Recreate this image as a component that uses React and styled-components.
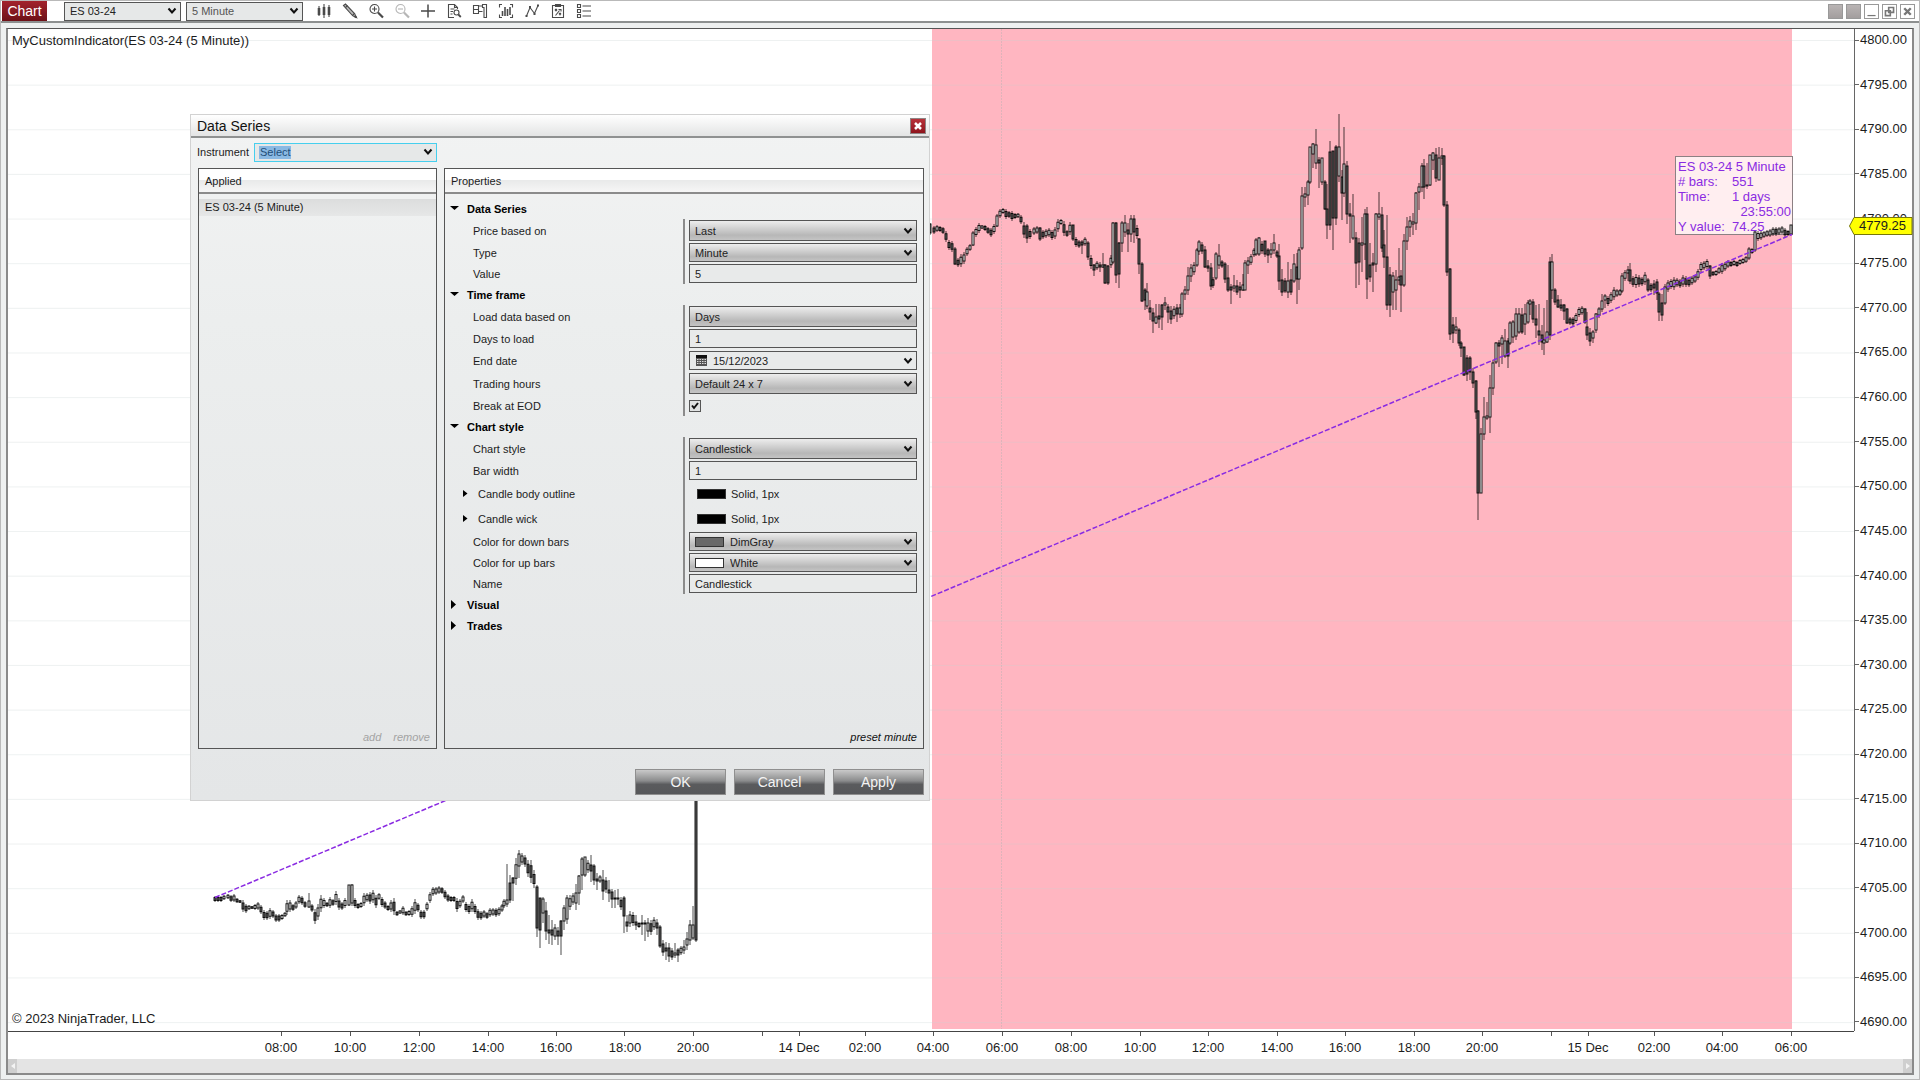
import styled, { createGlobalStyle } from "styled-components"
import { useState } from "react"

const GlobalStyle = createGlobalStyle`
  * { box-sizing: border-box; }
  body {
    margin: 0;
    font-family: "Liberation Sans", Arial, sans-serif;
    color: #1c1c1c;
  }
  button, input, select {
    font-family: inherit;
    font-size: 11px;
    color: inherit;
    margin: 0;
  }
`

/* ---------- window ---------- */

const Page = styled.div`
  position: relative;
  display: flex;
  flex-direction: column;
  height: 100vh;
  border: 1px solid #b9b9b9;
  background: #eef0f0;
`
const Toolbar = styled.header`
  display: flex;
  align-items: center;
  height: 22px;
  padding: 0 4px 0 1px;
  background: #fff;
  border-bottom: 2px solid #8d9090;
`
const ChartTab = styled.span`
  display: flex;
  align-items: center;
  justify-content: center;
  width: 45px;
  height: 20px;
  margin-right: 17px;
  background: linear-gradient(#a3222c, #6d1118);
  color: #fff;
  font-size: 14px;
`
const ToolSelects = styled.div`
  display: flex;
  gap: 5px;
`
const ToolIcons = styled.div`
  display: flex;
  gap: 10px;
  margin-left: 13px;
`
const IconButton = styled.button`
  display: flex;
  width: 16px;
  height: 16px;
  padding: 0;
  border: 0;
  background: none;
  opacity: ${p => (p.disabled ? 0.4 : 1)};
`
const WindowButtons = styled.div`
  display: flex;
  gap: 3px;
  margin-left: auto;
`
const WindowButton = styled.button`
  display: flex;
  width: 15px;
  height: 15px;
  padding: 0;
  border: 1px solid #999;
  background: ${p => (p.$filled ? "linear-gradient(#b9b4b4, #a39e9e)" : "#fff")};
`
const Main = styled.main`
  flex: 1;
  display: flex;
  min-height: 0;
  padding: 5px 5px 4px;
`
const Frame = styled.div`
  flex: 1;
  display: grid;
  grid-template-columns: 1fr 58px;
  grid-template-rows: 1fr 28px 14px;
  border: 2px solid #8a8a8a;
  border-top: 1px solid #555;
  background: #fff;
`

/* ---------- chart ---------- */

const Plot = styled.div`
  position: relative;
  min-height: 0;
`
const Layer = styled.svg`
  position: absolute;
  inset: 0;
  width: 100%;
  height: 100%;
  pointer-events: none;
`
const PlotText = styled.span`
  position: absolute;
  left: 4px;
  font-size: 13px;
  line-height: 14px;
  ${p => (p.$bottom ? "bottom: 5px;" : "top: 5px;")}
`
const Ruler = styled.div`
  position: absolute;
  right: 61px;
  top: 127px;
  width: 118px;
  height: 79px;
  padding: 2px 1px 0 2px;
  border: 1px solid #8c8083;
  background: rgba(255, 255, 255, 0.76);
  color: #8a2be2;
  font-size: 13px;
  line-height: 15px;
  white-space: nowrap;
`
const RulerRow = styled.div`
  display: grid;
  grid-template-columns: 54px 1fr;
`
const RulerTime = styled.div`
  text-align: right;
`
const PriceAxis = styled.div`
  position: relative;
  display: flex;
  flex-direction: column;
  justify-content: space-between;
  padding: 4px 0 2px;
  border-left: 1px solid #666;
  font-size: 13px;
  line-height: 14px;
`
const Price = styled.div`
  display: flex;
  align-items: center;
  gap: 1px;
  height: 14px;
  &::before {
    content: "";
    width: 4px;
    height: 1px;
    background: #666;
  }
`
const PriceTag = styled.div`
  position: absolute;
  left: -6px;
  right: 0;
  top: 188px;
  height: 18px;
  svg {
    position: absolute;
    inset: 0;
  }
  span {
    position: relative;
    display: block;
    padding-left: 10px;
    font-size: 13px;
    line-height: 18px;
  }
`
const TimeAxis = styled.div`
  position: relative;
  border-top: 1px solid #444;
`
const Corner = styled.div``
const TimeTick = styled.div`
  position: absolute;
  top: 0;
  width: 60px;
  margin-left: -29px;
  text-align: center;
  font-size: 13px;
  line-height: 14px;
  white-space: nowrap;
  &::before {
    content: "";
    display: block;
    width: 1px;
    height: 4px;
    margin: 0 auto 5px;
    background: #555;
  }
`
const ScrollBar = styled.div`
  grid-column: 1 / 3;
  display: flex;
  justify-content: space-between;
  background: #e4e4e4;
`
const ScrollButton = styled.button`
  width: 9px;
  padding: 0;
  border: 0;
  background: #cfcfcf;
  display: flex;
  align-items: center;
  justify-content: center;
`

/* ---------- dialog ---------- */

const Dialog = styled.section`
  position: absolute;
  left: 189px;
  top: 113px;
  width: 740px;
  height: 687px;
  display: flex;
  flex-direction: column;
  border: 1px solid #d2d2d2;
  background: linear-gradient(#f2f3f3, #eceeee 30%, #e4e6e7);
`
const TitleBar = styled.div`
  display: flex;
  align-items: center;
  justify-content: space-between;
  height: 23px;
  padding: 0 3px 0 6px;
  background: linear-gradient(#fff, #e3e4e4);
  border-bottom: 2px solid #8f9191;
`
const Title = styled.h1`
  margin: 0;
  font-size: 14px;
  font-weight: normal;
  color: #111;
`
const CloseButton = styled.button`
  display: flex;
  width: 16px;
  height: 16px;
  padding: 0;
  border: 1px solid #8f8585;
  background: linear-gradient(#b8323a, #8e141c);
`
const InstrumentRow = styled.div`
  display: grid;
  grid-template-columns: 57px 183px;
  align-items: center;
  height: 30px;
  padding: 0 0 2px 6px;
  font-size: 11px;
`
const Panels = styled.div`
  flex: 1;
  display: grid;
  grid-template-columns: 239px 1fr;
  gap: 7px;
  padding: 0 5px 0 7px;
  min-height: 0;
`
const Panel = styled.div`
  display: flex;
  flex-direction: column;
  border: 1px solid #555;
`
const PanelHeader = styled.h2`
  margin: 0;
  height: 25px;
  padding: 0 6px;
  font-size: 11px;
  font-weight: normal;
  line-height: 25px;
  background: linear-gradient(#fff 50%, #e9eaea 50%, #f6f6f6);
  border-bottom: 2px solid #8b8b8b;
`
const PanelFooter = styled.div`
  display: flex;
  justify-content: flex-end;
  gap: 12px;
  margin-top: auto;
  padding: 0 6px 4px;
`
const TextButton = styled.button`
  padding: 0;
  border: 0;
  background: none;
  font-style: italic;
  line-height: 14px;
  color: #111;
  &:disabled { color: #a3a3a3; }
`
const AppliedList = styled.ul`
  list-style: none;
  margin: 5px 0 0;
  padding: 0;
`
const AppliedItem = styled.li`
  padding: 0 6px;
  font-size: 11px;
  line-height: 17px;
  background: linear-gradient(#dcdddd, #e6e7e7);
`
const Groups = styled.div`
  padding-top: 4px;
`
const GroupButton = styled.button`
  display: flex;
  align-items: center;
  gap: 8px;
  width: 100%;
  height: 21px;
  padding: 0 0 0 5px;
  border: 0;
  background: none;
  font-weight: bold;
  color: #000;
`
const Row = styled.div`
  display: grid;
  grid-template-columns: 1fr 240px;
  height: ${p => p.$height || 21}px;
`
const Label = styled.label`
  display: flex;
  align-items: center;
  gap: 10px;
  padding-left: ${p => (p.$nested ? 18 : 28)}px;
  font-size: 11px;
`
const Value = styled.div`
  display: flex;
  align-items: center;
  padding: 0 6px 0 4px;
  border-left: 2px solid #8b8b8b;
  font-size: 11px;
`
const Field = styled.div`
  position: relative;
  width: ${p => p.$width || "100%"};
`
const Chevron = styled.svg`
  position: absolute;
  right: 4px;
  top: calc(50% - 4px);
  pointer-events: none;
`
const Select = styled.select`
  appearance: none;
  display: block;
  width: 100%;
  height: ${p => (p.$tall ? 21 : 19)}px;
  padding: 0 20px 0 ${p => (p.$swatch ? 40 : 5)}px;
  border: 1px solid #555;
  border-radius: 0;
  background: ${p => (p.$flat ? "#e6e8e8" : "linear-gradient(#ededed, #b7b7b7 75%, #c4c4c4)")};
  color: ${p => (p.$muted ? "#555" : "#222")};
  outline: 0;
`
const InstrumentSelect = styled(Select)`
  border-color: #46cfee;
  color: #1f4e79;
  background: linear-gradient(#8ab9e3, #8ab9e3) 4px 2px / 32px 13px no-repeat, #e6e8e8;
`
const TextBox = styled.input`
  display: block;
  width: 100%;
  height: 19px;
  padding: 0 5px 0 ${p => (p.$icon ? 23 : 5)}px;
  border: 1px solid #555;
  background: #e8eaea;
  color: #222;
  outline: 0;
`
const CalendarIcon = styled.svg`
  position: absolute;
  left: 7px;
  top: 4px;
`
const CheckBox = styled.input`
  appearance: none;
  display: block;
  width: 12px;
  height: 12px;
  border: 1px solid #555;
  background: #e0e2e2;
`
const CheckMark = styled.svg`
  position: absolute;
  left: 1px;
  top: 1px;
  pointer-events: none;
`
const Swatch = styled.span`
  width: 29px;
  height: 10px;
  border: 1px solid #333;
  background: ${p => p.$color};
`
const FieldSwatch = styled(Swatch)`
  position: absolute;
  left: 6px;
  top: 5px;
`
const Stroke = styled.span`
  display: flex;
  align-items: center;
  gap: 5px;
  padding-left: 8px;
`
const DialogButtons = styled.div`
  display: flex;
  justify-content: flex-end;
  gap: 8px;
  padding: 20px 5px 5px;
`
const DialogButton = styled.button`
  width: 91px;
  height: 26px;
  padding: 0;
  border: 1px solid #8f8f8f;
  background: linear-gradient(#c9c9c9, #8b8c8d 45%, #5a5b5d 60%, #56575a);
  color: #f4f4f4;
  font-size: 14px;
`

/* ---------- chart data ---------- */

// [x, high, low] or [x, high, low, bodyTop, bodyBottom]
const firstSession = [
  [215, 896, 902], [218, 896, 902], [221, 896, 902], [224, 895, 900], [228, 894, 899], [231, 895, 902], [234, 894, 902],
  [237, 898, 903], [240, 900, 903], [243, 900, 912], [246, 904, 913], [249, 905, 910], [252, 906, 909], [255, 904, 910],
  [258, 902, 910], [261, 905, 914], [264, 910, 920], [267, 911, 920], [270, 908, 919], [273, 910, 918], [276, 914, 922],
  [279, 914, 922], [282, 914, 920], [285, 912, 917], [287, 900, 915], [290, 900, 912], [293, 904, 911], [296, 901, 909],
  [299, 895, 904], [302, 896, 905], [305, 901, 908], [309, 893, 908, 901, 907], [312, 904, 912], [315, 909, 924],
  [318, 904, 920], [321, 895, 912], [324, 898, 908], [327, 902, 907], [330, 897, 908], [333, 899, 906], [336, 891, 905],
  [339, 898, 910], [342, 902, 910], [345, 898, 908], [349, 885, 906, 885, 905], [352, 884, 906, 885, 903], [355, 898, 908],
  [358, 903, 909], [361, 902, 908], [364, 893, 906], [367, 893, 902], [370, 892, 904], [373, 890, 903], [376, 895, 908],
  [379, 893, 900], [382, 897, 907], [385, 901, 909], [388, 905, 911], [391, 900, 912], [394, 898, 915], [397, 911, 916],
  [400, 910, 914], [403, 906, 915], [406, 911, 916], [409, 910, 916], [412, 906, 917], [415, 899, 914], [418, 903, 912],
  [421, 910, 919], [424, 910, 919], [427, 902, 911], [430, 892, 903], [433, 887, 896], [436, 887, 895], [439, 886, 894],
  [442, 887, 894], [445, 890, 899], [448, 894, 902], [451, 896, 902], [454, 896, 902], [457, 898, 912], [460, 899, 908],
  [463, 895, 903], [466, 902, 912], [469, 904, 914], [472, 899, 912], [475, 904, 914], [478, 909, 920], [481, 911, 920],
  [484, 910, 918], [487, 912, 919], [490, 908, 917], [493, 908, 916], [496, 908, 917], [499, 907, 916], [502, 904, 912],
  [504, 899, 908], [507, 864, 907, 900, 904], [510, 875, 903, 883, 900], [513, 877, 901, 878, 883], [516, 858, 885],
  [519, 850, 878, 854, 866], [522, 853, 865], [525, 855, 867], [528, 860, 877], [531, 860, 883], [534, 870, 888],
  [537, 885, 937, 887, 928], [540, 898, 948, 898, 930], [543, 897, 923, 899, 913], [546, 902, 940, 911, 931],
  [549, 915, 944, 930, 933], [552, 920, 945, 930, 935], [555, 924, 940], [558, 927, 945, 931, 936],
  [561, 920, 955, 921, 936], [564, 905, 930, 908, 921], [567, 895, 924, 898, 919], [570, 895, 910], [573, 893, 905],
  [576, 884, 910, 893, 903], [579, 875, 905, 876, 893], [582, 857, 890, 859, 875], [585, 857, 877, 857, 875],
  [588, 860, 873], [591, 855, 882, 865, 871], [594, 864, 885, 866, 880], [597, 873, 890, 879, 881], [600, 875, 883],
  [603, 870, 900, 880, 891], [606, 877, 893], [609, 880, 902, 890, 893], [612, 889, 908, 892, 899], [615, 890, 908, 898, 899],
  [618, 889, 905, 898, 899], [621, 897, 910], [624, 896, 933, 898, 916], [627, 915, 932, 922, 926], [630, 911, 927],
  [633, 912, 926], [636, 915, 930, 922, 925], [639, 922, 928], [642, 915, 935, 923, 924], [645, 920, 941, 923, 924],
  [648, 918, 937, 923, 931], [651, 920, 935], [654, 917, 930], [657, 919, 935, 923, 928], [660, 925, 948, 927, 946],
  [663, 940, 956], [666, 942, 960, 948, 951], [669, 943, 962, 948, 956], [672, 948, 960], [675, 943, 958, 953, 955],
  [678, 948, 962, 950, 955], [681, 946, 955], [684, 940, 954, 947, 950], [687, 932, 950, 939, 945],
  [690, 920, 945, 925, 940], [693, 906, 940, 925, 938], [696, 640, 942, 645, 940]
]

const secondSession = [
  [930, 223, 235, 224, 233], [934, 226, 234], [937, 225, 232], [940, 226, 232], [943, 227, 234], [946, 231, 242],
  [949, 240, 250], [952, 241, 252], [955, 247, 265, 249, 264], [958, 258, 267], [961, 254, 267], [964, 252, 264],
  [967, 247, 256], [970, 244, 251], [973, 231, 246, 233, 245], [976, 227, 237], [979, 223, 233], [982, 225, 229],
  [985, 225, 231], [988, 227, 234], [991, 228, 237], [994, 224, 234], [997, 214, 227, 216, 226], [1000, 209, 218],
  [1003, 208, 214], [1006, 209, 219], [1009, 211, 218], [1012, 211, 221], [1015, 213, 219], [1018, 213, 218],
  [1021, 215, 224], [1024, 222, 238], [1027, 224, 243, 226, 238], [1030, 229, 239], [1034, 227, 235], [1037, 226, 234],
  [1040, 227, 241, 228, 239], [1043, 230, 239], [1046, 229, 238], [1049, 228, 237], [1052, 230, 240], [1055, 227, 239],
  [1058, 219, 232], [1061, 219, 225], [1064, 221, 236], [1067, 230, 237], [1070, 222, 235], [1073, 225, 241, 225, 239],
  [1076, 237, 247], [1079, 240, 248], [1082, 240, 254, 242, 245], [1085, 237, 246], [1088, 241, 260, 243, 257],
  [1091, 255, 269], [1094, 264, 276, 265, 270], [1097, 261, 270], [1100, 262, 272, 265, 267], [1103, 253, 268, 265, 267],
  [1105, 264, 284, 265, 283], [1108, 265, 285, 266, 283], [1111, 255, 268], [1113, 222, 264, 223, 262],
  [1116, 222, 283, 223, 275], [1119, 242, 288, 243, 274], [1122, 221, 252, 223, 243], [1125, 215, 237, 223, 232],
  [1128, 223, 252, 230, 234], [1131, 215, 242, 219, 234], [1134, 215, 243, 219, 232], [1137, 225, 239],
  [1139, 238, 274, 239, 264], [1142, 262, 302, 264, 301], [1145, 288, 310, 290, 300], [1147, 283, 309, 292, 306],
  [1150, 300, 320, 308, 312], [1153, 308, 333, 313, 321], [1156, 304, 324, 317, 323], [1159, 304, 328, 316, 319],
  [1162, 304, 330, 305, 317], [1165, 297, 310, 303, 305], [1168, 304, 323, 307, 312], [1171, 306, 324, 311, 319],
  [1174, 306, 319], [1177, 304, 322, 308, 314], [1180, 304, 318, 308, 314], [1182, 292, 317, 294, 314],
  [1185, 286, 300, 290, 294], [1188, 267, 295, 276, 290], [1191, 264, 282, 268, 276], [1194, 262, 275],
  [1197, 248, 267, 250, 265], [1199, 240, 255, 242, 251], [1202, 242, 254], [1205, 246, 268, 250, 267],
  [1208, 260, 272, 266, 268], [1211, 263, 290, 268, 286], [1213, 277, 288], [1216, 252, 280, 254, 278],
  [1219, 244, 269, 256, 265], [1222, 260, 268], [1225, 262, 283, 264, 279], [1228, 265, 292, 278, 290],
  [1231, 284, 304, 287, 290], [1234, 275, 292, 286, 288], [1237, 280, 295, 286, 292], [1240, 282, 298, 287, 290],
  [1243, 274, 291, 285, 290], [1245, 260, 290, 263, 290], [1248, 257, 274, 261, 265], [1251, 254, 265], [1254, 248, 257],
  [1256, 238, 256, 240, 254], [1259, 237, 256, 238, 254], [1262, 241, 254], [1265, 241, 257, 241, 254],
  [1268, 248, 263, 250, 255], [1271, 243, 258, 250, 254], [1274, 234, 254, 243, 250], [1277, 250, 258],
  [1279, 244, 290, 256, 281], [1282, 269, 296, 280, 292], [1285, 278, 293, 281, 291], [1288, 262, 298, 281, 292],
  [1291, 269, 295, 280, 292], [1294, 254, 283, 264, 281], [1297, 253, 304, 267, 279], [1299, 247, 290, 250, 279],
  [1302, 187, 250, 196, 248], [1305, 187, 207, 194, 197], [1308, 180, 205, 182, 195], [1310, 147, 184, 147, 182],
  [1313, 143, 168, 144, 154], [1316, 129, 169, 145, 163], [1319, 157, 188, 160, 163], [1322, 158, 185, 158, 182],
  [1325, 180, 210, 182, 209], [1327, 184, 239, 209, 225], [1330, 141, 230, 152, 225], [1333, 151, 250, 151, 218],
  [1336, 145, 225, 147, 218], [1339, 114, 182, 147, 176], [1342, 170, 220, 177, 193], [1344, 127, 197, 164, 193],
  [1347, 161, 224, 166, 214], [1350, 203, 243, 214, 216], [1353, 194, 240, 216, 238], [1356, 232, 288, 238, 263],
  [1359, 238, 285, 243, 262], [1362, 217, 272, 243, 245], [1365, 209, 260, 214, 244], [1367, 207, 299, 214, 279],
  [1370, 243, 282, 265, 277], [1373, 253, 292, 263, 265], [1376, 213, 272, 214, 264], [1379, 192, 220, 214, 217],
  [1382, 207, 252, 215, 248], [1384, 230, 268, 245, 257], [1387, 215, 310, 257, 305], [1390, 267, 317, 275, 305],
  [1393, 272, 310, 276, 292], [1396, 270, 310, 280, 290], [1399, 248, 285, 277, 280], [1401, 270, 312, 276, 285],
  [1404, 234, 287, 241, 285], [1407, 217, 250, 227, 241], [1410, 216, 237, 221, 227], [1413, 213, 235, 222, 224],
  [1416, 192, 230, 193, 223], [1419, 183, 210, 187, 192], [1422, 163, 192, 166, 187], [1424, 159, 199, 166, 187],
  [1427, 163, 189, 185, 186], [1430, 155, 186, 155, 185], [1433, 152, 170, 153, 160], [1436, 148, 182, 155, 178],
  [1439, 147, 180, 158, 180], [1442, 148, 165, 156, 158], [1444, 155, 207, 156, 205], [1447, 201, 276, 205, 272],
  [1450, 268, 340, 269, 334], [1453, 317, 343, 325, 333], [1456, 317, 334, 327, 330], [1459, 328, 346, 330, 343],
  [1461, 341, 357, 343, 348], [1464, 347, 376, 347, 375], [1467, 355, 381, 358, 374], [1470, 356, 380, 358, 372],
  [1473, 368, 388, 372, 383], [1476, 380, 419, 381, 412], [1478, 410, 520, 411, 493], [1481, 428, 493, 434, 493],
  [1484, 397, 440, 417, 434], [1487, 402, 420, 416, 418], [1490, 375, 433, 388, 417], [1493, 360, 395, 363, 388],
  [1496, 342, 364, 343, 362], [1499, 340, 367, 343, 346], [1502, 335, 364, 338, 344], [1505, 329, 358, 341, 356],
  [1508, 338, 368, 341, 356], [1510, 321, 345, 323, 343], [1513, 320, 343, 322, 337], [1516, 308, 340, 314, 336],
  [1519, 308, 334, 314, 332], [1522, 308, 334, 315, 332], [1525, 304, 335, 314, 324], [1528, 300, 324, 303, 322],
  [1530, 299, 315, 301, 304], [1533, 299, 323, 302, 319], [1536, 305, 338, 319, 325], [1539, 304, 345, 331, 335],
  [1542, 325, 350, 335, 342], [1544, 308, 355, 340, 343], [1547, 300, 343, 332, 342], [1550, 257, 340, 262, 335],
  [1552, 254, 299, 262, 290], [1555, 288, 305, 290, 302], [1558, 295, 308, 300, 307], [1561, 299, 311, 305, 308],
  [1564, 304, 320, 305, 311], [1567, 308, 324, 309, 323], [1570, 317, 325], [1573, 317, 326], [1576, 313, 323],
  [1579, 307, 317], [1582, 306, 315], [1585, 308, 324, 309, 322], [1587, 312, 340, 327, 335], [1590, 328, 346, 333, 341],
  [1593, 330, 343, 332, 338], [1596, 313, 333, 314, 330], [1599, 307, 318, 309, 315], [1602, 294, 312, 301, 309],
  [1605, 294, 308, 296, 300], [1608, 296, 306], [1611, 292, 303], [1614, 287, 300], [1617, 289, 297], [1620, 289, 296],
  [1622, 273, 293, 276, 291], [1625, 270, 281], [1628, 266, 281, 270, 273], [1630, 263, 284, 270, 281], [1633, 276, 287],
  [1636, 274, 288], [1639, 275, 287], [1642, 277, 286], [1645, 272, 285], [1648, 278, 292, 280, 290], [1651, 283, 292],
  [1654, 280, 295, 284, 288], [1657, 279, 300, 282, 293], [1659, 292, 321, 294, 312], [1662, 294, 321, 303, 315],
  [1665, 284, 305, 287, 303], [1668, 280, 292], [1671, 279, 289], [1674, 277, 290], [1677, 278, 287], [1680, 279, 288],
  [1683, 275, 287], [1686, 276, 287], [1689, 278, 287], [1692, 276, 285], [1695, 275, 283], [1698, 269, 280],
  [1701, 262, 272], [1704, 261, 270], [1707, 259, 269], [1710, 265, 279, 266, 276], [1713, 271, 276], [1716, 270, 276],
  [1719, 267, 274], [1722, 263, 274], [1725, 262, 271], [1728, 260, 268], [1731, 261, 267], [1734, 260, 266],
  [1737, 261, 267], [1740, 259, 265], [1743, 258, 264], [1746, 256, 263], [1749, 247, 260, 249, 258], [1752, 248, 254],
  [1755, 231, 252, 232, 250], [1758, 231, 241], [1761, 231, 240], [1764, 231, 238], [1767, 230, 237], [1770, 229, 237],
  [1773, 227, 236], [1776, 227, 236], [1779, 227, 235], [1782, 226, 234], [1785, 228, 237], [1788, 230, 236],
  [1791, 225, 234, 225, 234]
]

const prices = Array.from({ length: 23 }, (_, i) => (4800 - i * 5).toFixed(2))

const times = [
  [280, "08:00"], [349, "10:00"], [418, "12:00"], [487, "14:00"], [555, "16:00"], [624, "18:00"], [692, "20:00"],
  [761, ""], [798, "14 Dec"], [864, "02:00"], [932, "04:00"], [1001, "06:00"], [1070, "08:00"], [1139, "10:00"],
  [1207, "12:00"], [1276, "14:00"], [1344, "16:00"], [1413, "18:00"], [1481, "20:00"], [1550, ""], [1587, "15 Dec"],
  [1653, "02:00"], [1721, "04:00"], [1790, "06:00"]
]

const VIEW = "8 29 1846 1002"

function Candles({ bars }) {
  return bars.map(([x, high, low, t, b], i) => {
    const pad = (low - high) * 0.25
    const top = t ?? high + pad
    const bottom = b ?? low - pad
    const prev = bars[i - 1]
    const up = prev && high + low < prev[1] + prev[2]
    // long runs read as solid, short up bars stay hollow
    const hollow = up && bottom - top < 60
    return (
      <g key={x}>
        <line x1={x} x2={x} y1={high} y2={low} stroke="#000" strokeOpacity="0.7" />
        <rect
          x={x - 1}
          y={top}
          width="2"
          height={Math.max(bottom - top, 1)}
          fill={hollow ? "#fff" : "#696969"}
          stroke="#000"
          strokeOpacity="0.9"
        />
      </g>
    )
  })
}

function Chart() {
  return (
    <Plot>
      <Layer viewBox={VIEW} preserveAspectRatio="none">
        <rect x="932" y="29" width="860" height="1000" fill="#ffb6c1" />
        {prices.map((p, i) => (
          <line key={p} x1="8" x2="1854" y1={40.5 + i * 44.64} y2={40.5 + i * 44.64} stroke="#c8d0d0" strokeOpacity="0.3" />
        ))}
        <line x1="1001.5" x2="1001.5" y1="29" y2="1029" stroke="#b0b0b0" strokeOpacity="0.4" strokeDasharray="2 1" />
      </Layer>
      <PlotText>MyCustomIndicator(ES 03-24 (5 Minute))</PlotText>
      <PlotText $bottom>© 2023 NinjaTrader, LLC</PlotText>
      <Ruler>
        <div>ES 03-24 5 Minute</div>
        <RulerRow><span># bars:</span><span>551</span></RulerRow>
        <RulerRow><span>Time:</span><span>1 days</span></RulerRow>
        <RulerTime>23:55:00</RulerTime>
        <RulerRow><span>Y value:</span><span>74.25</span></RulerRow>
      </Ruler>
      <Layer viewBox={VIEW} preserveAspectRatio="none">
        <Candles bars={firstSession} />
        <Candles bars={secondSession} />
        <line x1="215" y1="897.5" x2="1792" y2="234.5" stroke="#8a2be2" strokeWidth="1.5" strokeDasharray="5 2" />
      </Layer>
    </Plot>
  )
}

/* ---------- icons ---------- */

const Svg = ({ children, size = 16 }) => (
  <svg width={size} height={size} viewBox="0 0 16 16" fill="none" stroke="#4a4a4a" strokeWidth="1.1">
    {children}
  </svg>
)

const tools = [
  ["Chart style", <><path d="M3 3v10M8 1v14M13 2v12" /><path d="M3 5v7M8 4v8M13 4v8" strokeWidth="2.600" /></>],
  ["Drawing tools", <><path d="M1.500 2.500L3.500 1l9 9.500-2 2z" fill="#bbb" /><path d="M3.500 4.500l2-2" /><path d="M10.500 12.500l4 2-2-4" /><path d="M12 13l2.500 1.500" strokeWidth="2" /></>],
  ["Zoom in", <><circle cx="6.500" cy="6" r="4.500" /><path d="M4 6h5M6.500 3.500v5" /><path d="M10 9.500l5 5" strokeWidth="2.200" /></>],
  ["Zoom out", <><circle cx="6.500" cy="6" r="4.500" /><path d="M4 6h5" /><path d="M10 9.500l5 5" strokeWidth="2.200" /></>, true],
  ["Crosshair", <path d="M8 1.500v13M1 8h14" strokeWidth="1.500" />],
  ["Data box", <><path d="M8 14.500H2.500v-13h6l3 3V6M8.500 1.500v3h3M4.500 6h4M4.500 8.500h2.500M4.500 11h2" /><circle cx="10.500" cy="9.500" r="2.500" /><path d="M12.300 11.500l2.500 2.500" strokeWidth="1.800" /></>],
  ["Chart trader", <><path d="M1.500 2.500h5v8h-5zM1.500 6.500h5M6.500 3h4M6.500 8.500h4M10.500 1.500h4v13h-2.500v-10h-1.500z" /></>],
  ["Data series", <><path d="M4 1.500H1.500v3M12 1.500h2.500v3M4 14.500H1.500v-3M12 14.500h2.500v-3" /><path d="M4.500 8v5M7 4v9M9.500 6v7M12 4v8" strokeWidth="1.600" /></>],
  ["Indicators", <><path d="M2.500 13L6 4.500l4.500 6L14 2.500" /><path d="M1.500 13h2M5 4h2M9.500 11h2M13 2.500h2" strokeWidth="2.200" /></>],
  ["Strategies", <><path d="M2.500 2.500h11v12h-11zM5.500 1.500h5v2h-5z" /><path d="M5 6l2 2M7 6L5 8M9 10l2 2M11 10l-2 2M5.500 12.500l4-5M8.500 6.500h2.500v2" /></>],
  ["Properties", <><path d="M1.500 1.500h3v3h-3zM1.500 6.500h3v3h-3zM1.500 11.500h3v3h-3z" /><path d="M6.500 3h8.500M6.500 8h8.500M6.500 13h8.500" /></>]
]

const Down = () => (
  <Chevron width="10" height="8" viewBox="0 0 10 8" fill="none" stroke="#111" strokeWidth="2">
    <path d="M1.500 1.500L5 5.500l3.500-4" />
  </Chevron>
)

const Arrow = ({ open, small }) => (
  <svg width={small ? 5 : 9} height="9" viewBox={small ? "0 0 5 9" : "0 0 9 9"}>
    {open ? <path d="M0 2h9L4.500 6z" /> : small ? <path d="M0 1l4.500 3.500L0 8z" /> : <path d="M1 0l5 4.500L1 9z" />}
  </svg>
)

/* ---------- dialog content ---------- */

const groups = [
  {
    title: "Data Series",
    rows: [
      { label: "Price based on", type: "select", value: "Last", height: 23, tall: true },
      { label: "Type", type: "select", value: "Minute" },
      { label: "Value", type: "text", value: "5" }
    ]
  },
  {
    title: "Time frame",
    rows: [
      { label: "Load data based on", type: "select", value: "Days", height: 23, tall: true },
      { label: "Days to load", type: "text", value: "1" },
      { label: "End date", type: "date", value: "15/12/2023", height: 23 },
      { label: "Trading hours", type: "select", value: "Default 24 x 7", height: 23, tall: true },
      { label: "Break at EOD", type: "check" }
    ]
  },
  {
    title: "Chart style",
    rows: [
      { label: "Chart style", type: "select", value: "Candlestick", height: 23, tall: true },
      { label: "Bar width", type: "text", value: "1" },
      { label: "Candle body outline", type: "stroke", value: "Solid, 1px", height: 25 },
      { label: "Candle wick", type: "stroke", value: "Solid, 1px", height: 25 },
      { label: "Color for down bars", type: "select", value: "DimGray", swatch: "#696969" },
      { label: "Color for up bars", type: "select", value: "White", swatch: "#fff" },
      { label: "Name", type: "text", value: "Candlestick" }
    ]
  },
  { title: "Visual" },
  { title: "Trades" }
]

function Control({ id, row }) {
  if (row.type === "select") {
    return (
      <Field>
        <Select id={id} $tall={row.tall} $swatch={row.swatch}>
          <option>{row.value}</option>
        </Select>
        {row.swatch && <FieldSwatch $color={row.swatch} />}
        <Down />
      </Field>
    )
  }
  if (row.type === "date") {
    return (
      <Field>
        <TextBox id={id} defaultValue={row.value} $icon />
        <CalendarIcon width="11" height="11" viewBox="0 0 11 11">
          <path d="M0 0h11v11H0z" fill="#555" />
          <path d="M0 0h11v3H0z" fill="#111" />
          <path d="M1 4.500h9M1 6.500h9M1 8.500h9" stroke="#ddd" strokeDasharray="1.500 1" />
        </CalendarIcon>
        <Down />
      </Field>
    )
  }
  if (row.type === "check") {
    return (
      <Field $width="12px">
        <CheckBox type="checkbox" id={id} defaultChecked />
        <CheckMark width="10" height="10" viewBox="0 0 10 10" fill="none" stroke="#111" strokeWidth="2">
          <path d="M2 4.500l2 2.500 4-5" />
        </CheckMark>
      </Field>
    )
  }
  if (row.type === "stroke") {
    return <Stroke id={id}><Swatch $color="#000" />{row.value}</Stroke>
  }
  return <TextBox id={id} defaultValue={row.value} />
}

function Group({ group, index }) {
  const [open, setOpen] = useState(!!group.rows)

  return (
    <div>
      <GroupButton onClick={() => setOpen(!open)}>
        <Arrow open={open} />
        {group.title}
      </GroupButton>
      {open && group.rows && group.rows.map((row, i) => {
        const id = `prop-${index}-${i}`
        const nested = row.type === "stroke"
        return (
          <Row key={row.label} $height={row.height}>
            <Label as={nested ? "span" : "label"} htmlFor={nested ? undefined : id} $nested={nested}>
              {nested && <Arrow small />}
              {row.label}
            </Label>
            <Value><Control id={id} row={row} /></Value>
          </Row>
        )
      })}
    </div>
  )
}

function DataSeries() {
  return (
    <Dialog role="dialog" aria-labelledby="dialog-title">
      <TitleBar>
        <Title id="dialog-title">Data Series</Title>
        <CloseButton aria-label="Close">
          <svg width="14" height="14" viewBox="0 0 14 14" stroke="#fff" strokeWidth="2.500">
            <path d="M4 4l6 6M10 4l-6 6" />
          </svg>
        </CloseButton>
      </TitleBar>
      <InstrumentRow>
        <label htmlFor="instrument">Instrument</label>
        <Field>
          <InstrumentSelect id="instrument"><option>Select</option></InstrumentSelect>
          <Down />
        </Field>
      </InstrumentRow>
      <Panels>
        <Panel>
          <PanelHeader>Applied</PanelHeader>
          <AppliedList><AppliedItem>ES 03-24 (5 Minute)</AppliedItem></AppliedList>
          <PanelFooter>
            <TextButton disabled>add</TextButton>
            <TextButton disabled>remove</TextButton>
          </PanelFooter>
        </Panel>
        <Panel>
          <PanelHeader>Properties</PanelHeader>
          <Groups>
            {groups.map((group, i) => <Group key={group.title} group={group} index={i} />)}
          </Groups>
          <PanelFooter>
            <TextButton>preset minute</TextButton>
          </PanelFooter>
        </Panel>
      </Panels>
      <DialogButtons>
        <DialogButton>OK</DialogButton>
        <DialogButton>Cancel</DialogButton>
        <DialogButton>Apply</DialogButton>
      </DialogButtons>
    </Dialog>
  )
}

export default function App() {
  return (
    <>
      <GlobalStyle />
      <Page>
        <Toolbar>
          <ChartTab>Chart</ChartTab>
          <ToolSelects>
            <Field $width="117px">
              <Select aria-label="Instrument" $flat><option>ES 03-24</option></Select>
              <Down />
            </Field>
            <Field $width="117px">
              <Select aria-label="Interval" $flat $muted><option>5 Minute</option></Select>
              <Down />
            </Field>
          </ToolSelects>
          <ToolIcons>
            {tools.map(([name, icon, disabled]) => (
              <IconButton key={name} aria-label={name} disabled={disabled}><Svg>{icon}</Svg></IconButton>
            ))}
          </ToolIcons>
          <WindowButtons>
            <WindowButton aria-label="Link instrument" $filled />
            <WindowButton aria-label="Link interval" $filled />
            <WindowButton aria-label="Minimize">
              <Svg size={13}><path d="M3 13h10" stroke="#777" strokeWidth="1.500" /></Svg>
            </WindowButton>
            <WindowButton aria-label="Restore">
              <Svg size={13}><path d="M7 3h6v6H7zM3 7h6v6H3z" stroke="#777" strokeWidth="2" /></Svg>
            </WindowButton>
            <WindowButton aria-label="Close window">
              <Svg size={13}><path d="M4 4l8 8M12 4l-8 8" stroke="#777" strokeWidth="3" /></Svg>
            </WindowButton>
          </WindowButtons>
        </Toolbar>
        <Main>
          <Frame>
            <Chart />
            <PriceAxis>
              {prices.map(p => <Price key={p}>{p}</Price>)}
              <PriceTag>
                <svg width="64" height="18" viewBox="0 0 64 18">
                  <path d="M.5 9L5 .5h58v17H5z" fill="#ff0" stroke="#77770a" />
                </svg>
                <span>4779.25</span>
              </PriceTag>
            </PriceAxis>
            <TimeAxis>
              {times.map(([x, label]) => (
                <TimeTick key={x} style={{ left: `${((x - 8) / 1846) * 100}%` }}>{label}</TimeTick>
              ))}
            </TimeAxis>
            <Corner />
            <ScrollBar>
              <ScrollButton aria-label="Scroll left">
                <svg width="4" height="6" viewBox="0 0 4 6"><path d="M4 0L0 3l4 3z" fill="#f4f4f4" /></svg>
              </ScrollButton>
              <ScrollButton aria-label="Scroll right">
                <svg width="4" height="6" viewBox="0 0 4 6"><path d="M0 0l4 3-4 3z" fill="#f4f4f4" /></svg>
              </ScrollButton>
            </ScrollBar>
          </Frame>
        </Main>
        <DataSeries />
      </Page>
    </>
  )
}
